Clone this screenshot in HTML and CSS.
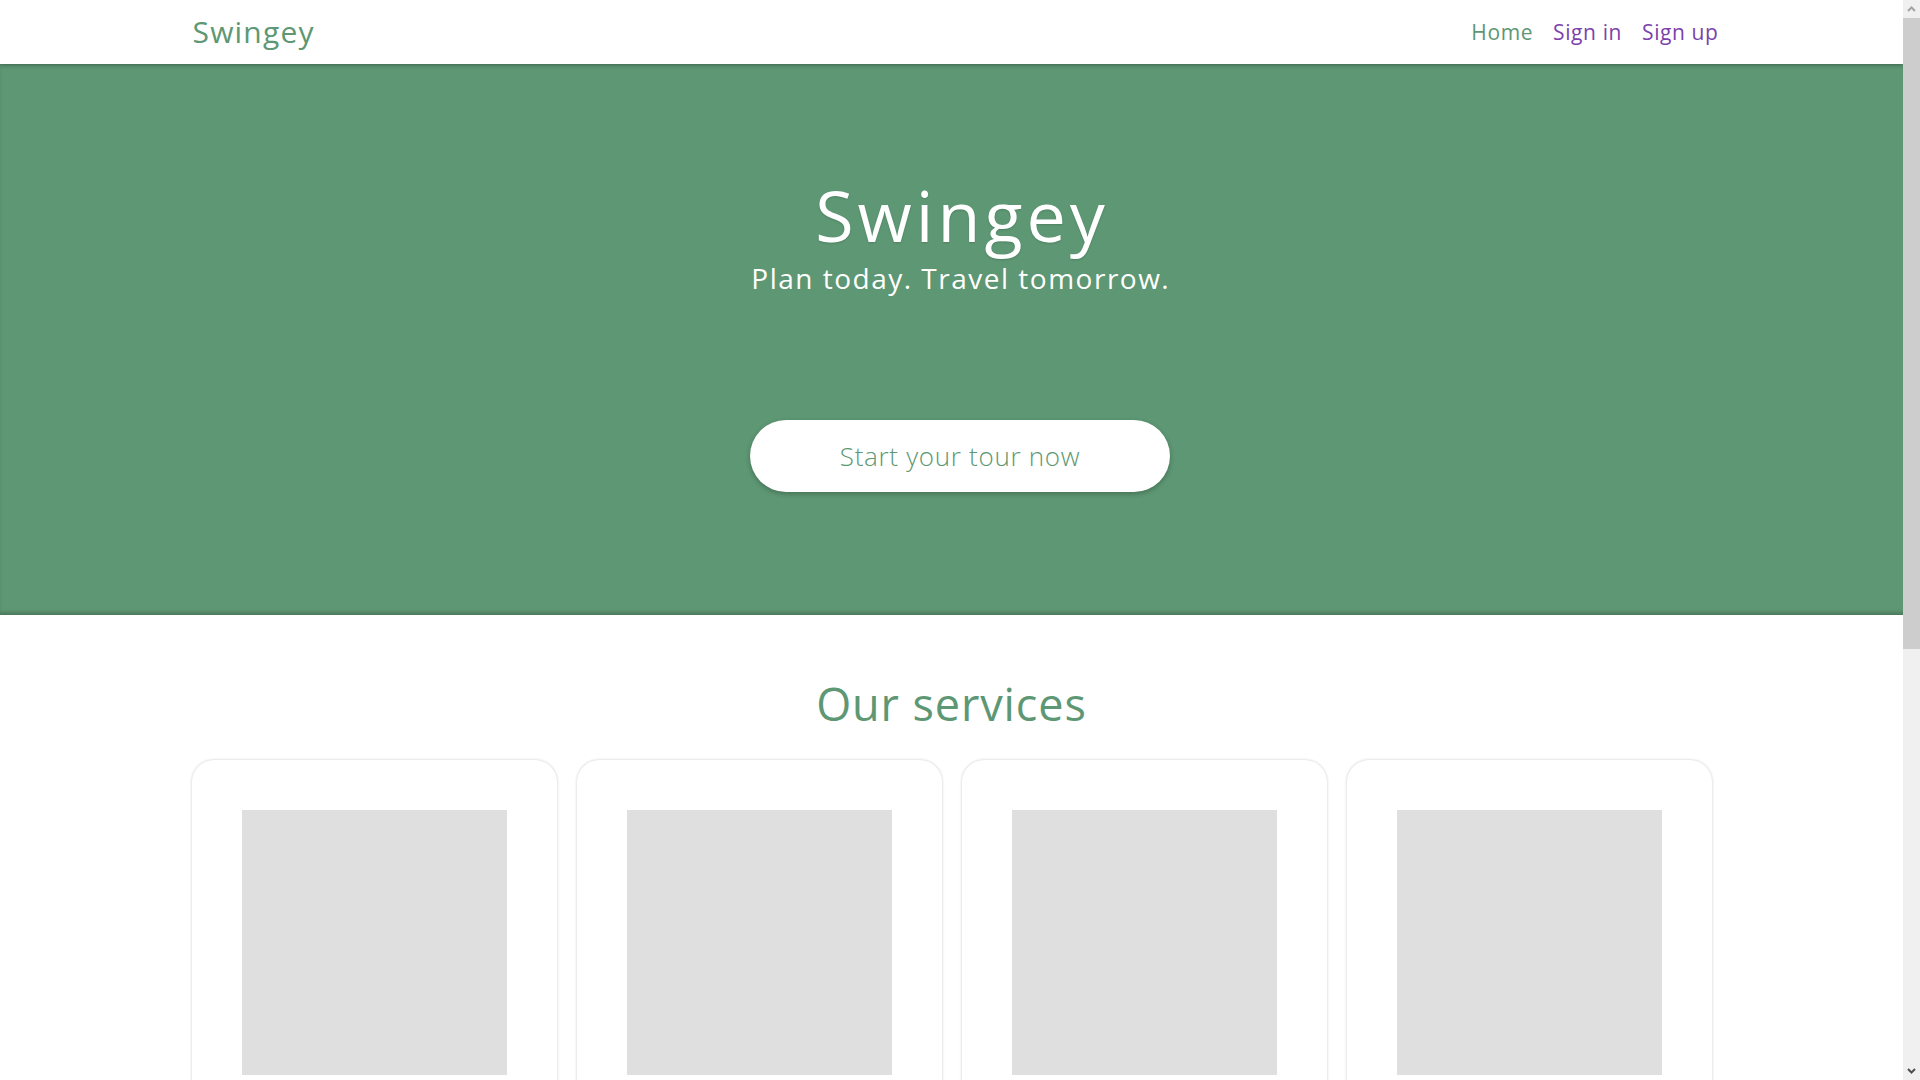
FILE: index.html
```html
<!DOCTYPE html>
<html lang="en">
<head>
<meta charset="utf-8">
<title>Swingey</title>
<link rel="stylesheet" href="styles.css">
</head>
<body>
<header class="navbar">
  <div class="container nav-inner">
    <a class="brand" href="#">Swingey</a>
    <nav class="nav-links">
      <a class="nav-link active" href="#">Home</a>
      <a class="nav-link" href="#">Sign in</a>
      <a class="nav-link" href="#">Sign up</a>
    </nav>
  </div>
</header>
<section class="hero">
  <h1 class="hero-title">Swingey</h1>
  <p class="hero-sub">Plan today. Travel tomorrow.</p>
  <a class="hero-btn" href="#">Start your tour now</a>
</section>
<section class="services">
  <div class="container">
    <h2 class="services-title">Our services</h2>
    <div class="cards">
      <div class="card"><div class="card-img"></div><p class="card-text"></p></div>
      <div class="card"><div class="card-img"></div><p class="card-text"></p></div>
      <div class="card"><div class="card-img"></div><p class="card-text"></p></div>
      <div class="card"><div class="card-img"></div><p class="card-text"></p></div>
    </div>
  </div>
</section>
<div class="scrollbar" aria-hidden="true">
  <div class="sb-btn sb-up">
    <svg width="9" height="6" viewBox="0 0 9 6"><polyline points="1,5 4.5,1.5 8,5" fill="none" stroke="#a3a3a3" stroke-width="2"/></svg>
  </div>
  <div class="sb-thumb"></div>
  <div class="sb-btn sb-down">
    <svg width="9" height="6" viewBox="0 0 9 6"><polyline points="1,1 4.5,4.5 8,1" fill="none" stroke="#505050" stroke-width="2"/></svg>
  </div>
</div>
</body>
</html>
```
FILE: styles.css
```css
* { box-sizing: border-box; }
html {
  margin: 0;
  padding: 0;
  background: #f0f0f0;
  overflow-x: hidden;
}
body {
  margin: 0 17px 0 0;
  padding: 0;
  font-family: "Open Sans", "Noto Sans", sans-serif;
  background: #ffffff;
  color: #5d9773;
}
a { text-decoration: none; }
.container {
  width: 1520px;
  margin: 0 auto;
}
.navbar {
  height: 64px;
  background: #ffffff;
  box-shadow: 0 1px 4px rgba(0, 0, 0, 0.35);
  position: relative;
  z-index: 2;
}
.nav-inner {
  height: 64px;
  display: flex;
  align-items: center;
  justify-content: space-between;
}
.brand {
  font-size: 30px;
  color: #5d9773;
  letter-spacing: 1.2px;
  padding-left: 1px;
  margin-top: -1px;
}
.nav-links {
  display: flex;
  gap: 20px;
  margin-right: -7px;
}
.nav-link {
  font-size: 21px;
  color: #7b42ab;
  letter-spacing: 0.6px;
}
.nav-link.active { color: #5d9773; }

.hero {
  width: 100vw;
  height: 551px;
  background: #5d9773;
  box-shadow: inset 0 -4px 4px -2px rgba(0, 0, 0, 0.25);
  display: flex;
  flex-direction: column;
  align-items: center;
  padding-top: 116px;
  color: #ffffff;
}
.hero-title {
  margin: 0;
  font-size: 70px;
  font-weight: 500;
  line-height: 70px;
  letter-spacing: 4px;
  text-indent: 4px;
  text-shadow: 0 1px 2px rgba(0, 0, 0, 0.15);
}
.hero-sub {
  margin: 14px 0 0;
  font-size: 28px;
  line-height: 28px;
  letter-spacing: 1.5px;
  text-indent: 1.5px;
}
.hero-btn {
  margin-top: 128px;
  width: 420px;
  height: 72px;
  border-radius: 36px;
  background: #ffffff;
  color: #5d9773;
  font-size: 26px;
  font-weight: 300;
  letter-spacing: 0.7px;
  display: flex;
  align-items: center;
  justify-content: center;
  box-shadow: 0 2px 5px rgba(0, 0, 0, 0.25);
}

.services {
  padding-top: 62px;
  padding-bottom: 300px;
}
.services-title {
  margin: 0;
  text-align: center;
  font-size: 45px;
  font-weight: 500;
  line-height: 1.2;
  letter-spacing: 0.9px;
  color: #5d9773;
}
.cards {
  margin-top: 29px;
  display: grid;
  grid-template-columns: repeat(4, 1fr);
  gap: 20px;
}
.card {
  background: #ffffff;
  border-radius: 22px;
  box-shadow: 0 0 3px rgba(0, 0, 0, 0.22);
  padding: 50px 50px 60px;
  display: flex;
  flex-direction: column;
  align-items: center;
}
.card-img {
  width: 265px;
  height: 265px;
  background: #dfdfdf;
}
.card-text {
  margin: 30px 0 0;
  height: 200px;
}

/* window scrollbar, drawn over the page's right edge */
.scrollbar {
  position: fixed;
  top: 0;
  right: 0;
  width: 17px;
  height: 100vh;
  background: #f0f0f0;
  display: flex;
  flex-direction: column;
  z-index: 10;
}
.sb-btn {
  height: 18px;
  display: flex;
  align-items: center;
  justify-content: center;
}
.sb-thumb {
  height: 631px;
  background: #cdcdcd;
}
.sb-down { margin-top: auto; }
```
